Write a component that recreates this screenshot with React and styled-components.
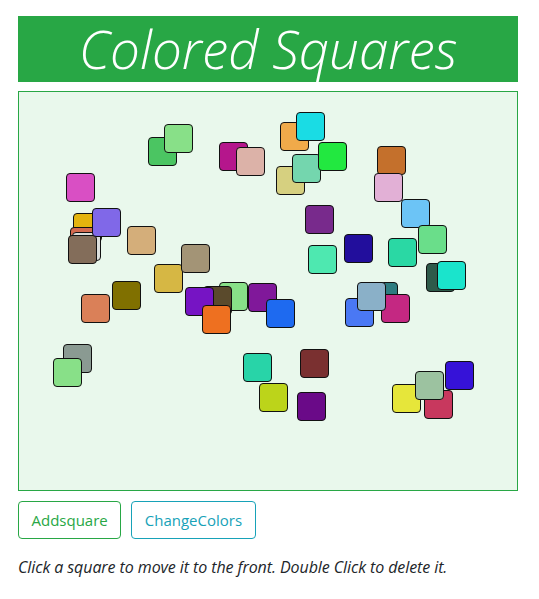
import React from "react";
import styled, { createGlobalStyle } from "styled-components";

const squares = [
  { x: 148, y: 137, c: "#4bc562" },
  { x: 164, y: 124, c: "#88e088" },
  { x: 66, y: 173, c: "#d94fc4" },
  { x: 73, y: 213, c: "#e4b40e" },
  { x: 70, y: 227, c: "#d46a50" },
  { x: 72, y: 232, c: "#dcdfdc" },
  { x: 68, y: 235, c: "#836d5a" },
  { x: 92, y: 208, c: "#8068e8" },
  { x: 127, y: 226, c: "#d4ae7a" },
  { x: 154, y: 264, c: "#d6b744" },
  { x: 181, y: 244, c: "#a39476" },
  { x: 112, y: 281, c: "#807000" },
  { x: 81, y: 294, c: "#da8058" },
  { x: 219, y: 282, c: "#88e088" },
  { x: 203, y: 286, c: "#5a4a2c" },
  { x: 185, y: 287, c: "#7614c4" },
  { x: 202, y: 305, c: "#ee7020" },
  { x: 248, y: 283, c: "#80189a" },
  { x: 266, y: 299, c: "#1e6af0" },
  { x: 219, y: 142, c: "#b5168c" },
  { x: 236, y: 147, c: "#dcb2a8" },
  { x: 280, y: 122, c: "#f0aa4a" },
  { x: 296, y: 112, c: "#1adce4" },
  { x: 276, y: 166, c: "#d6d080" },
  { x: 292, y: 154, c: "#74d6ae" },
  { x: 318, y: 142, c: "#22e840" },
  { x: 305, y: 205, c: "#782a8c" },
  { x: 344, y: 234, c: "#220e9c" },
  { x: 308, y: 245, c: "#4ee8b0" },
  { x: 377, y: 146, c: "#c4702c" },
  { x: 374, y: 173, c: "#e2b0d6" },
  { x: 401, y: 199, c: "#6cc4f6" },
  { x: 418, y: 225, c: "#6ade8a" },
  { x: 388, y: 238, c: "#2ad8a4" },
  { x: 426, y: 263, c: "#2e5a4a" },
  { x: 437, y: 261, c: "#1ae4cc" },
  { x: 369, y: 282, c: "#2e7c80" },
  { x: 345, y: 298, c: "#4a78f4" },
  { x: 381, y: 294, c: "#c42882" },
  { x: 357, y: 282, c: "#8ab0c8" },
  { x: 243, y: 353, c: "#28d4a8" },
  { x: 259, y: 383, c: "#bcd41a" },
  { x: 300, y: 349, c: "#7a3030" },
  { x: 297, y: 392, c: "#6a0a88" },
  { x: 63, y: 344, c: "#8a9a92" },
  { x: 53, y: 358, c: "#88e088" },
  { x: 392, y: 384, c: "#e6e63a" },
  { x: 424, y: 390, c: "#c8385e" },
  { x: 415, y: 371, c: "#9cc2a0" },
  { x: 445, y: 361, c: "#3612d8" },
];

const GlobalStyle = createGlobalStyle`
  body {
    margin: 0;
    background: #fff;
    font-family: "Open Sans", "Noto Sans", sans-serif;
    color: #212529;
  }
`;

const Page = styled.div`
  width: 500px;
  padding: 16px 18px;
`;

const Header = styled.h1`
  margin: 0 0 9px;
  height: 66px;
  background: #28a745;
  color: #fff;
  text-align: center;
  font-size: 53px;
  font-weight: 300;
  font-style: italic;
  line-height: 66px;
  overflow: visible;
`;

const Board = styled.div`
  position: relative;
  height: 398px;
  border: 1px solid #28a745;
  background: #e9f8ec;
`;

const Square = styled.div`
  position: absolute;
  width: 29px;
  height: 29px;
  box-sizing: border-box;
  border: 1px solid #111;
  border-radius: 4px;
  cursor: pointer;
`;

const Actions = styled.div`
  display: flex;
  gap: 10px;
  margin-top: 10px;
`;

const Button = styled.button`
  height: 38px;
  padding: 0 12.5px;
  font-family: "Open Sans", "Noto Sans", sans-serif;
  font-size: 15px;
  color: ${(p) => p.color};
  background: transparent;
  border: 1px solid ${(p) => p.color};
  border-radius: 4px;
  cursor: pointer;
`;

const Hint = styled.p`
  margin: 16px 0 0;
  font-size: 16px;
  font-style: italic;
  letter-spacing: -0.08px;
  line-height: 24px;
`;

export default function App() {
  return (
    <>
      <GlobalStyle />
      <Page>
        <Header>Colored Squares</Header>
        <Board>
          {squares.map((s, i) => (
            <Square
              key={i}
              style={{ left: s.x - 19, top: s.y - 92, background: s.c }}
            />
          ))}
        </Board>
        <Actions>
          <Button color="#28a745">Addsquare</Button>
          <Button color="#17a2b8">ChangeColors</Button>
        </Actions>
        <Hint>Click a square to move it to the front. Double Click to delete it.</Hint>
      </Page>
    </>
  );
}
